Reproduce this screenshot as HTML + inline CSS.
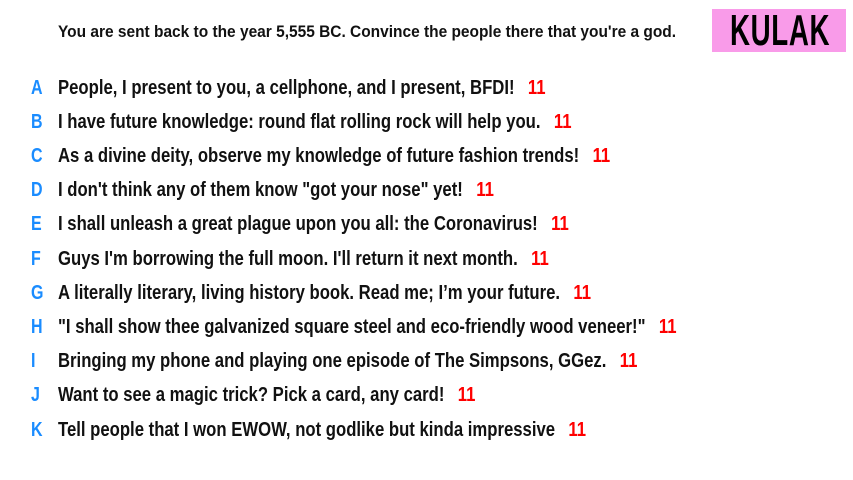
<!DOCTYPE html>
<html><head><meta charset="utf-8"><style>
body{margin:0;width:853px;height:480px;background:#fff;overflow:hidden;position:relative;font-family:"Liberation Sans",sans-serif;color:#111}
.h{position:absolute;left:58px;top:22px;font-size:17px;font-weight:bold;white-space:nowrap;transform-origin:0 0;transform:scaleX(0.91)}
.k{position:absolute;left:712px;top:9px;width:134px;height:43px;background:#f99be9}
.k span{position:absolute;left:18px;top:0px;font-size:44px;font-weight:bold;line-height:44px;transform-origin:0 0;transform:scaleX(0.63);color:#000;letter-spacing:1px}
.r{position:absolute;left:0;height:30px;white-space:nowrap}
.l{position:absolute;left:31px;color:#1a8cff;font-size:20px;font-weight:bold;transform-origin:0 0;transform:scaleX(0.8)}
.t{position:absolute;left:58px;font-size:20px;font-weight:bold;transform-origin:0 0;transform:scaleX(0.835)}
.n{color:#f00;margin-left:16px}
</style></head><body>
<div class="h">You are sent back to the year 5,555 BC. Convince the people there that you're a god.</div>
<div class="k"><span>KULAK</span></div>
<div class="r" style="top:77px"><span class="l">A</span><span class="t">People, I present to you, a cellphone, and I present, BFDI!<span class="n">11</span></span></div>
<div class="r" style="top:111px"><span class="l">B</span><span class="t">I have future knowledge: round flat rolling rock will help you.<span class="n">11</span></span></div>
<div class="r" style="top:145px"><span class="l">C</span><span class="t">As a divine deity, observe my knowledge of future fashion trends!<span class="n">11</span></span></div>
<div class="r" style="top:179px"><span class="l">D</span><span class="t">I don't think any of them know "got your nose" yet!<span class="n">11</span></span></div>
<div class="r" style="top:213px"><span class="l">E</span><span class="t">I shall unleash a great plague upon you all: the Coronavirus!<span class="n">11</span></span></div>
<div class="r" style="top:248px"><span class="l">F</span><span class="t">Guys I'm borrowing the full moon. I'll return it next month.<span class="n">11</span></span></div>
<div class="r" style="top:282px"><span class="l">G</span><span class="t">A literally literary, living history book. Read me; I’m your future.<span class="n">11</span></span></div>
<div class="r" style="top:316px"><span class="l">H</span><span class="t">"I shall show thee galvanized square steel and eco-friendly wood veneer!"<span class="n">11</span></span></div>
<div class="r" style="top:350px"><span class="l">I</span><span class="t">Bringing my phone and playing one episode of The Simpsons, GGez.<span class="n">11</span></span></div>
<div class="r" style="top:384px"><span class="l">J</span><span class="t">Want to see a magic trick? Pick a card, any card!<span class="n">11</span></span></div>
<div class="r" style="top:419px"><span class="l">K</span><span class="t">Tell people that I won EWOW, not godlike but kinda impressive<span class="n">11</span></span></div>
</body></html>
